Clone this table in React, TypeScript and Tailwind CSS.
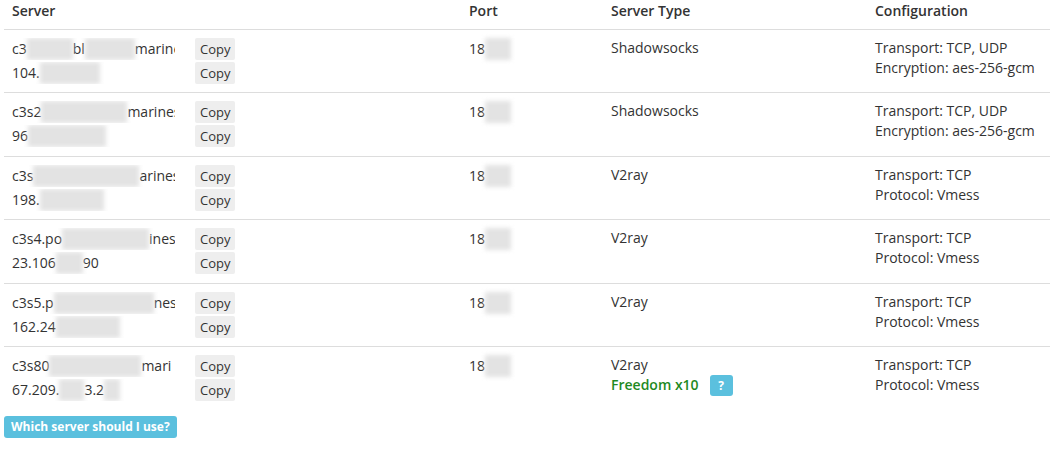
type Part = string | number;

type Row = {
  name: Part[];
  ip: Part[];
  port: string;
  type: string;
  bonus?: boolean;
  config: string[];
};

// numbers are redaction widths (blurred patches), strings are visible text
const rows: Row[] = [
  {
    name: ['c3', 46, 'bl', 50, 'marines'],
    ip: ['104.', 60],
    port: '18',
    type: 'Shadowsocks',
    config: ['Transport: TCP, UDP', 'Encryption: aes-256-gcm'],
  },
  {
    name: ['c3s2', 86, 'marines'],
    ip: ['96', 78],
    port: '18',
    type: 'Shadowsocks',
    config: ['Transport: TCP, UDP', 'Encryption: aes-256-gcm'],
  },
  {
    name: ['c3s', 106, 'arines'],
    ip: ['198.', 64],
    port: '18',
    type: 'V2ray',
    config: ['Transport: TCP', 'Protocol: Vmess'],
  },
  {
    name: ['c3s4.po', 87, 'ines'],
    ip: ['23.106', 27, '90'],
    port: '18',
    type: 'V2ray',
    config: ['Transport: TCP', 'Protocol: Vmess'],
  },
  {
    name: ['c3s5.p', 100, 'nes'],
    ip: ['162.24', 64],
    port: '18',
    type: 'V2ray',
    config: ['Transport: TCP', 'Protocol: Vmess'],
  },
  {
    name: ['c3s80', 92, 'mari'],
    ip: ['67.209.', 25, '3.2', 16],
    port: '18',
    type: 'V2ray',
    bonus: true,
    config: ['Transport: TCP', 'Protocol: Vmess'],
  },
];

function Redacted({ w }: { w: number }) {
  return (
    <span
      className="inline-block h-[22px] shrink-0 bg-[#e3e3e3] blur-[2px]"
      style={{ width: w }}
    />
  );
}

function Line({ parts }: { parts: Part[] }) {
  return (
    <div className="flex w-[163px] items-center overflow-hidden whitespace-nowrap">
      {parts.map((p, i) =>
        typeof p === 'number' ? <Redacted key={i} w={p} /> : <span key={i}>{p}</span>
      )}
    </div>
  );
}

function CopyButton() {
  return (
    <button className="h-[22px] rounded-[2px] bg-[#eeeeee] px-[5px] text-[13px] leading-[22px] text-[#333]">
      Copy
    </button>
  );
}

export default function App() {
  return (
    <div
      className="min-h-[454px] w-[1050px] bg-white pl-1 text-[14px] leading-5 text-[#333]"
      style={{ fontFamily: '"Open Sans", "Liberation Sans", sans-serif' }}
    >
      <div className="grid h-[29px] grid-cols-[457px_142px_264px_1fr] pt-[1px] font-semibold">
        <div className="px-2">Server</div>
        <div className="px-2">Port</div>
        <div className="px-2">Server Type</div>
        <div className="px-2">Configuration</div>
      </div>

      {rows.map((r, idx) => (
        <div
          key={idx}
          className="grid h-[63.4px] grid-cols-[457px_142px_264px_1fr] border-t border-[#dddddd] pt-2"
        >
          <div className="flex flex-col gap-[2px] px-2">
            <div className="flex items-center gap-5">
              <Line parts={r.name} />
              <CopyButton />
            </div>
            <div className="flex items-center gap-5">
              <Line parts={r.ip} />
              <CopyButton />
            </div>
          </div>

          <div className="flex h-[22px] items-center px-2">
            <span>{r.port}</span>
            <Redacted w={26} />
          </div>

          <div className="px-2">
            <div>{r.type}</div>
            {r.bonus && (
              <div className="flex items-center gap-[11px]">
                <span className="font-semibold text-[#1f8a1f]">Freedom x10</span>
                <button className="h-[21px] w-[23px] rounded-[3px] bg-[#5bc0de] text-[12px] font-bold leading-[21px] text-white">
                  ?
                </button>
              </div>
            )}
          </div>

          <div className="px-2">
            {r.config.map((c) => (
              <div key={c}>{c}</div>
            ))}
          </div>
        </div>
      ))}

      <button className="mt-[7px] h-[22px] rounded-[3px] bg-[#5bc0de] px-[7px] text-[12px] font-bold leading-[22px] text-white">
        Which server should I use?
      </button>
    </div>
  );
}
